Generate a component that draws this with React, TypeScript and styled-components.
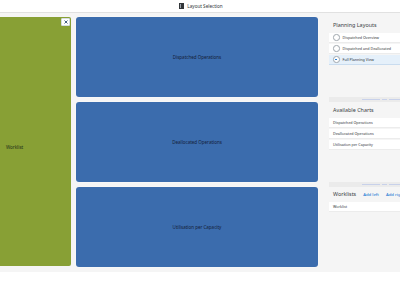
import React from "react";
import styled, { createGlobalStyle } from "styled-components";

const Global = createGlobalStyle`
  html, body { margin: 0; padding: 0; background: #ffffff; overflow: hidden; }
  body { font-family: "Noto Sans", "Open Sans", Arial, sans-serif; color: #32363a; }
`;

const Page = styled.div`
  width: 400px;
  height: 284px;
  overflow: hidden;
  display: flex;
  flex-direction: column;
  background: #ffffff;
`;

const Header = styled.header`
  height: 12px;
  flex: none;
  display: flex;
  align-items: center;
  justify-content: center;
  gap: 3px;
  border-bottom: 1px solid #e1e1e1;
  font-size: 4.6px;
  color: #32363a;
  padding-left: 2px;
`;

const Main = styled.main`
  height: 259px;
  flex: none;
  background: #f5f5f5;
  display: flex;
  align-items: flex-start;
`;

const WorklistPanel = styled.section`
  position: relative;
  margin-top: 4px;
  width: 71px;
  height: 249px;
  flex: none;
  background: #88a035;
  border-radius: 0 2px 2px 0;
  display: flex;
  align-items: center;
  padding: 11px 0 0 6px;
  box-sizing: border-box;
  font-size: 4.5px;
  color: #24301a;
`;

const CloseButton = styled.button`
  position: absolute;
  top: 1px;
  right: 1px;
  width: 9px;
  height: 8px;
  padding: 0;
  border: 1px solid #d5dce3;
  border-radius: 1px;
  background: #ffffff;
  display: flex;
  align-items: center;
  justify-content: center;
`;

const ChartColumn = styled.div`
  margin-top: 4px;
  margin-left: 5px;
  width: 242px;
  flex: none;
  display: flex;
  flex-direction: column;
  gap: 5px;
`;

const ChartTile = styled.div`
  height: 80px;
  background: #3b6cad;
  border-radius: 3px;
  box-shadow: 0 0 0 0.5px rgba(255, 255, 255, 0.4);
  display: flex;
  align-items: center;
  justify-content: center;
  font-size: 4.5px;
  color: #14213a;
`;

const SidePanel = styled.aside`
  margin-left: 11px;
  width: 111px;
  flex: none;
  height: 259px;
  display: flex;
  flex-direction: column;
`;

const SideSection = styled.div<{ $h: number; $top: number }>`
  height: ${(p) => p.$h}px;
  padding-top: ${(p) => p.$top}px;
  box-sizing: border-box;
  display: flex;
  flex-direction: column;
`;

const SectionHead = styled.div`
  height: 10px;
  display: flex;
  align-items: center;
  gap: 7px;
  padding-left: 4px;
  margin-bottom: 3px;
`;

const SectionTitle = styled.span`
  font-size: 5.4px;
  color: #3a3f44;
`;

const HeadLink = styled.span`
  font-size: 4.3px;
  color: #0a6ed1;
`;

const List = styled.div`
  display: flex;
  flex-direction: column;
  gap: 1px;
`;

const Row = styled.div<{ $selected?: boolean }>`
  height: 9px;
  display: flex;
  align-items: center;
  gap: 3px;
  padding-left: 4px;
  background: ${(p) => (p.$selected ? "#e5f0fa" : "#ffffff")};
  border-bottom: 0.5px solid ${(p) => (p.$selected ? "#c9dcef" : "#ececec")};
  font-size: 3.7px;
  color: #32363a;
  white-space: nowrap;
`;

const Radio = styled.span<{ $on?: boolean }>`
  width: 4.5px;
  height: 4.5px;
  border-radius: 50%;
  border: 0.5px solid #a0a7ae;
  background: #ffffff;
  flex: none;
  display: flex;
  align-items: center;
  justify-content: center;
  &::after {
    content: "";
    width: 1.8px;
    height: 1.8px;
    border-radius: 50%;
    background: ${(p) => (p.$on ? "#0a6ed1" : "transparent")};
  }
`;

const Splitter = styled.div`
  height: 5px;
  flex: none;
  background: #ebebeb;
  display: flex;
  align-items: center;
  justify-content: center;
  gap: 2px;
`;

const Grip = styled.span<{ $w: number }>`
  width: ${(p) => p.$w}px;
  height: 1px;
  background: #c8d1ea;
`;

const Footer = styled.div`
  flex: 1;
  background: #ffffff;
`;

const layouts = [
  { label: "Dispatched Overview", on: false },
  { label: "Dispatched and Deallocated", on: false },
  { label: "Full Planning View", on: true },
];

const charts = ["Dispatched Operations", "Deallocated Operations", "Utilisation per Capacity"];

function SplitBar() {
  return (
    <Splitter>
      <Grip $w={18} />
      <Grip $w={5} />
      <Grip $w={18} />
    </Splitter>
  );
}

export default function App() {
  return (
    <Page>
      <Global />
      <Header>
        <svg width="5" height="6" viewBox="0 0 5 6">
          <rect x="0" y="0" width="5" height="6" fill="#32363a" />
          <rect x="1" y="1" width="1" height="4" fill="#9aa3ad" />
        </svg>
        <span>Layout Selection</span>
      </Header>
      <Main>
        <WorklistPanel>
          <CloseButton aria-label="close">
            <svg width="4" height="4" viewBox="0 0 4 4">
              <path d="M0.5 0.5 L3.5 3.5 M3.5 0.5 L0.5 3.5" stroke="#2f4f77" strokeWidth="0.9" />
            </svg>
          </CloseButton>
          Worklist
        </WorklistPanel>
        <ChartColumn>
          <ChartTile>Dispatched Operations</ChartTile>
          <ChartTile>Deallocated Operations</ChartTile>
          <ChartTile>Utilisation per Capacity</ChartTile>
        </ChartColumn>
        <SidePanel>
          <SideSection $h={84} $top={7}>
            <SectionHead>
              <SectionTitle>Planning Layouts</SectionTitle>
            </SectionHead>
            <List>
              {layouts.map((l) => (
                <Row key={l.label} $selected={l.on}>
                  <Radio $on={l.on} />
                  {l.label}
                </Row>
              ))}
            </List>
          </SideSection>
          <SplitBar />
          <SideSection $h={80} $top={3}>
            <SectionHead>
              <SectionTitle>Available Charts</SectionTitle>
            </SectionHead>
            <List>
              {charts.map((c) => (
                <Row key={c}>{c}</Row>
              ))}
            </List>
          </SideSection>
          <SplitBar />
          <SideSection $h={85} $top={2}>
            <SectionHead>
              <SectionTitle>Worklists</SectionTitle>
              <HeadLink>Add left</HeadLink>
              <HeadLink>Add right</HeadLink>
            </SectionHead>
            <List>
              <Row>Worklist</Row>
            </List>
          </SideSection>
        </SidePanel>
      </Main>
      <Footer />
    </Page>
  );
}
